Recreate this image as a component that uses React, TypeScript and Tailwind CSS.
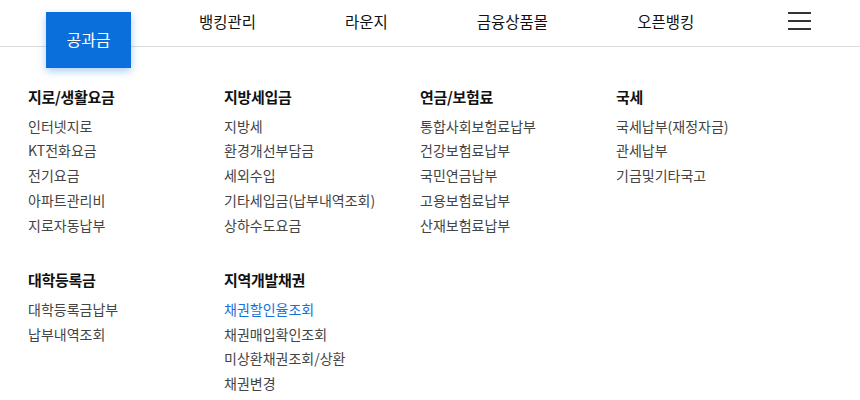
import React from "react";

type Section = { title: string; items: string[]; active?: number };

const row1: Section[] = [
  { title: "지로/생활요금", items: ["인터넷지로", "KT전화요금", "전기요금", "아파트관리비", "지로자동납부"] },
  { title: "지방세입금", items: ["지방세", "환경개선부담금", "세외수입", "기타세입금(납부내역조회)", "상하수도요금"] },
  { title: "연금/보험료", items: ["통합사회보험료납부", "건강보험료납부", "국민연금납부", "고용보험료납부", "산재보험료납부"] },
  { title: "국세", items: ["국세납부(재정자금)", "관세납부", "기금및기타국고"] },
];

const row2: Section[] = [
  { title: "대학등록금", items: ["대학등록금납부", "납부내역조회"] },
  { title: "지역개발채권", items: ["채권할인율조회", "채권매입확인조회", "미상환채권조회/상환", "채권변경"], active: 0 },
];

function Col({ s }: { s?: Section }) {
  if (!s) return <div />;
  return (
    <div className="flex flex-col">
      <div className="text-[15px] font-bold leading-[20px] text-[#111] tracking-[-0.3px]">{s.title}</div>
      <ul className="mt-[6.5px] flex flex-col">
        {s.items.map((it, i) => (
          <li
            key={it}
            className={`text-[14px] leading-[24.75px] ${i === s.active ? "text-[#1a6fd8]" : "text-[#444]"}`}
          >
            {it}
          </li>
        ))}
      </ul>
    </div>
  );
}

export default function App() {
  return (
    <div
      className="w-[860px] h-[400px] bg-white overflow-hidden"
      style={{ fontFamily: '"Noto Sans CJK KR", "Noto Sans", sans-serif' }}
    >
      <header className="h-[47px] border-b border-[#dddddd] flex items-start pl-[46px] pr-[49px]">
        <div className="relative z-10 mt-[12px] w-[85px] h-[56px] bg-[#0a6fdb] shadow-[0_3px_8px_rgba(10,111,219,0.35)] flex items-center justify-center">
          <span className="text-white text-[16px] leading-[20px] mt-[-2px]">공과금</span>
        </div>
        <nav className="ml-[68px] mt-[11px] flex gap-[89px] text-[15.5px] leading-[20px] text-[#111]">
          <span>뱅킹관리</span>
          <span>라운지</span>
          <span>금융상품몰</span>
          <span>오픈뱅킹</span>
        </nav>
        <div className="ml-auto mt-[12px] flex flex-col gap-[6px] w-[23px]">
          <span className="block h-[2px] bg-[#333]" />
          <span className="block h-[2px] bg-[#333]" />
          <span className="block h-[2px] bg-[#333]" />
        </div>
      </header>
      <main className="pl-[28px] pt-[40px]">
        <div className="grid grid-cols-[196px_196px_196px_196px]">
          {row1.map((s) => (
            <Col key={s.title} s={s} />
          ))}
        </div>
        <div className="mt-[33px] grid grid-cols-[196px_196px_196px_196px]">
          {row2.map((s) => (
            <Col key={s.title} s={s} />
          ))}
        </div>
      </main>
    </div>
  );
}
